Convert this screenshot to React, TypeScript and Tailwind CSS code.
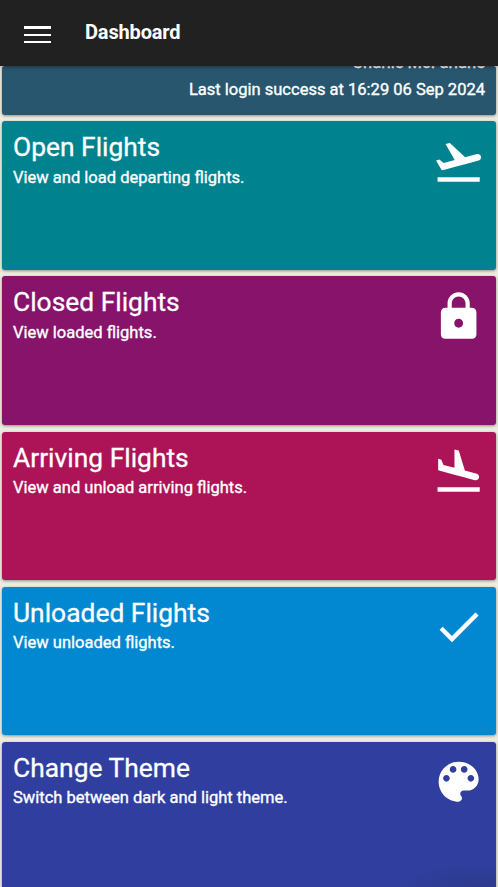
import React from 'react';

const TAKEOFF =
  'M2.5 19h19v2h-19zm19.57-9.36c-.21-.8-1.04-1.28-1.84-1.06L14.92 10l-6.9-6.43-1.93.51 4.14 7.17-4.97 1.33-1.97-1.54-1.45.39 1.82 3.16.77 1.33 1.6-.43 5.31-1.42 4.35-1.16L21 11.49c.81-.23 1.28-1.05 1.07-1.85z';
const LOCK =
  'M18 8h-1V6c0-2.76-2.24-5-5-5S7 3.24 7 6v2H6c-1.1 0-2 .9-2 2v10c0 1.1.9 2 2 2h12c1.1 0 2-.9 2-2V10c0-1.1-.9-2-2-2zm-6 9c-1.1 0-2-.9-2-2s.9-2 2-2 2 .9 2 2-.9 2-2 2zm3.1-9H8.9V6c0-1.71 1.39-3.1 3.1-3.1 1.71 0 3.1 1.39 3.1 3.1v2z';
const LAND =
  'M2.5 19h19v2h-19zm7.18-5.73l4.35 1.16 5.31 1.42c.8.21 1.62-.26 1.84-1.06.21-.8-.26-1.62-1.06-1.84l-5.31-1.42-2.76-9.02L10.12 2v8.28L5.15 8.95l-.93-2.32-1.45-.39v5.17l1.6.43 5.31 1.43z';
const CHECK = 'M9 16.17L4.83 12l-1.42 1.41L9 19 21 7l-1.41-1.41z';
const PALETTE =
  'M12 3c-4.97 0-9 4.03-9 9s4.03 9 9 9c.83 0 1.5-.67 1.5-1.5 0-.39-.15-.74-.39-1.01-.23-.26-.38-.61-.38-.99 0-.83.67-1.5 1.5-1.5H16c2.76 0 5-2.24 5-5 0-4.42-4.03-8-9-8zm-5.5 9c-.83 0-1.5-.67-1.5-1.5S5.67 9 6.5 9 8 9.67 8 10.5 7.33 12 6.5 12zm3-4C8.67 8 8 7.33 8 6.5S8.67 5 9.5 5s1.5.67 1.5 1.5S10.33 8 9.5 8zm5 0c-.83 0-1.5-.67-1.5-1.5S13.67 5 14.5 5s1.5.67 1.5 1.5S15.33 8 14.5 8zm3 4c-.83 0-1.5-.67-1.5-1.5S16.67 9 17.5 9s1.5.67 1.5 1.5-.67 1.5-1.5 1.5z';

const tiles = [
  { title: 'Open Flights', text: 'View and load departing flights.', color: 'bg-[#00838f]', icon: TAKEOFF },
  { title: 'Closed Flights', text: 'View loaded flights.', color: 'bg-[#88136b]', icon: LOCK },
  { title: 'Arriving Flights', text: 'View and unload arriving flights.', color: 'bg-[#ad1457]', icon: LAND },
  { title: 'Unloaded Flights', text: 'View unloaded flights.', color: 'bg-[#0288d1]', icon: CHECK },
  { title: 'Change Theme', text: 'Switch between dark and light theme.', color: 'bg-[#303f9f]', icon: PALETTE },
];

const CARD = 'shrink-0 rounded-[3px] shadow-[0_1px_3px_rgba(0,0,0,0.4)]';
const BODY = 'text-[16.52px] [-webkit-text-stroke:0.35px_white]';

export default function App() {
  return (
    <div className="relative flex h-[887px] w-[498px] flex-col overflow-hidden bg-[#ecece0] font-[Roboto,sans-serif] text-white">
      <header className="z-10 flex h-[66px] shrink-0 items-center bg-[#212121] pl-6 shadow-[0_1px_4px_rgba(0,0,0,0.4)]">
        <div className="mt-[2px] flex w-[27px] flex-col gap-[5px]">
          <span className="h-[3px] bg-white" />
          <span className="h-[2px] bg-white" />
          <span className="h-[2px] bg-white" />
        </div>
        <h1 className="ml-[34px] mt-[-2px] text-[20px] font-bold leading-6 tracking-[-0.15px]">Dashboard</h1>
      </header>
      <main className="flex min-h-0 flex-1 flex-col gap-[6.7px] overflow-hidden px-[2px]">
        <section className={`${CARD} ${BODY} flex h-[48.55px] flex-col items-end justify-end bg-[#29566f] pb-[12px] pr-[11px] leading-[27px]`}>
          <p>Charlie McFarlane</p>
          <p>Last login success at 16:29 06 Sep 2024</p>
        </section>
        {tiles.map((tile) => (
          <section key={tile.title} className={`${CARD} flex h-[148.5px] justify-between pl-[11px] pr-[11px] ${tile.color}`}>
            <div className="pt-[9px]">
              <h2 className="text-[26.4px] leading-[34px] [-webkit-text-stroke:0.3px_white]">{tile.title}</h2>
              <p className={`${BODY} mt-[0.4px] leading-[26px]`}>{tile.text}</p>
            </div>
            <svg viewBox="0 0 24 24" fill="currentColor" className="mt-[13.3px] size-[53.3px]">
              <path d={tile.icon} />
            </svg>
          </section>
        ))}
      </main>
      <div className="pointer-events-none absolute bottom-0 right-[2px] h-[26px] w-[110px] bg-[radial-gradient(ellipse_at_85%_100%,rgba(30,30,50,0.18),transparent_70%)]" />
    </div>
  );
}
